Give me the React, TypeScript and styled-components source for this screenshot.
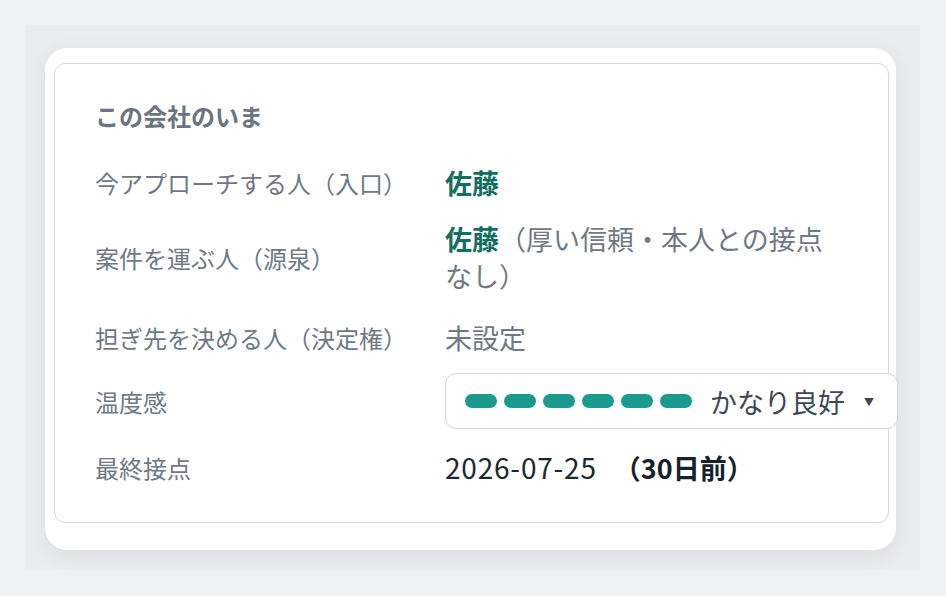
import React from "react";
import styled, { createGlobalStyle } from "styled-components";

const GlobalStyle = createGlobalStyle`
  html, body {
    margin: 0;
    padding: 0;
    background: #eef1f2;
  }
  body {
    font-family: "Noto Sans CJK JP", "Noto Sans", sans-serif;
    -webkit-font-smoothing: antialiased;
  }
`;

const Frame = styled.div`
  margin: 25px 0 0 25px;
  width: 895px;
  height: 545px;
  box-sizing: border-box;
  padding: 23px 24px 20px 20px;
  overflow: hidden;
  background: #eaedee;
`;

const Card = styled.section`
  box-sizing: border-box;
  width: 851px;
  height: 502px;
  background: #ffffff;
  border-radius: 22px;
  padding: 15px 7px 27px 9px;
  box-shadow: 0 6px 22px rgba(40, 55, 65, 0.08);
`;

const Panel = styled.div`
  box-sizing: border-box;
  height: 100%;
  border: 1.5px solid #d3d8dd;
  border-radius: 11px;
  padding: 33px 0 0 40px;
`;

const Heading = styled.h2`
  margin: 0 0 30px;
  font-size: 24px;
  line-height: 37px;
  font-weight: 700;
  color: #6b7581;
`;

const Row = styled.div<{ $space?: number }>`
  display: grid;
  grid-template-columns: 350px 1fr;
  align-items: center;
  margin-top: ${(p) => p.$space ?? 0}px;
`;

const Label = styled.div`
  font-size: 24px;
  line-height: 37px;
  color: #6e7985;
`;

const Value = styled.div<{ $tone?: "muted" | "dark" }>`
  font-size: 27px;
  line-height: 37px;
  max-width: 392px;
  color: ${(p) => (p.$tone === "dark" ? "#1d2731" : "#6e7985")};
`;

const Person = styled.span`
  font-weight: 700;
  color: #126e5f;
`;

const DateText = styled.span`
  font-size: 28px;
  letter-spacing: 0.8px;
`;

const Strong = styled.span`
  font-weight: 700;
  color: #17212b;
  margin-left: 17px;
`;

const Select = styled.div`
  box-sizing: border-box;
  width: 453px;
  height: 56px;
  display: flex;
  align-items: center;
  gap: 7px;
  padding: 0 22px 0 19px;
  border: 1.5px solid #d0d6dc;
  border-radius: 11px;
  background: #ffffff;
`;

const Pill = styled.span`
  width: 32px;
  height: 14px;
  border-radius: 7px;
  background: #1b9b8d;
`;

const SelectText = styled.span`
  margin-left: 11px;
  font-size: 27px;
  color: #3e4852;
`;

const Caret = styled.span`
  margin-left: 12px;
  font-size: 10px;
  color: #3e4852;
`;

const levels = 6;

export default function App() {
  return (
    <>
      <GlobalStyle />
      <Frame>
        <Card>
          <Panel>
            <Heading>この会社のいま</Heading>

            <Row>
              <Label>今アプローチする人（入口）</Label>
              <Value>
                <Person>佐藤</Person>
              </Value>
            </Row>

            <Row $space={19}>
              <Label>案件を運ぶ人（源泉）</Label>
              <Value>
                <Person>佐藤</Person>（厚い信頼・本人との接点なし）
              </Value>
            </Row>

            <Row $space={25}>
              <Label>担ぎ先を決める人（決定権）</Label>
              <Value>未設定</Value>
            </Row>

            <Row $space={17}>
              <Label>温度感</Label>
              <Select>
                {Array.from({ length: levels }, (_, i) => (
                  <Pill key={i} />
                ))}
                <SelectText>かなり良好</SelectText>
                <Caret>▼</Caret>
              </Select>
            </Row>

            <Row $space={20}>
              <Label>最終接点</Label>
              <Value $tone="dark">
                <DateText>2026-07-25</DateText>
                <Strong>（30日前）</Strong>
              </Value>
            </Row>
          </Panel>
        </Card>
      </Frame>
    </>
  );
}
